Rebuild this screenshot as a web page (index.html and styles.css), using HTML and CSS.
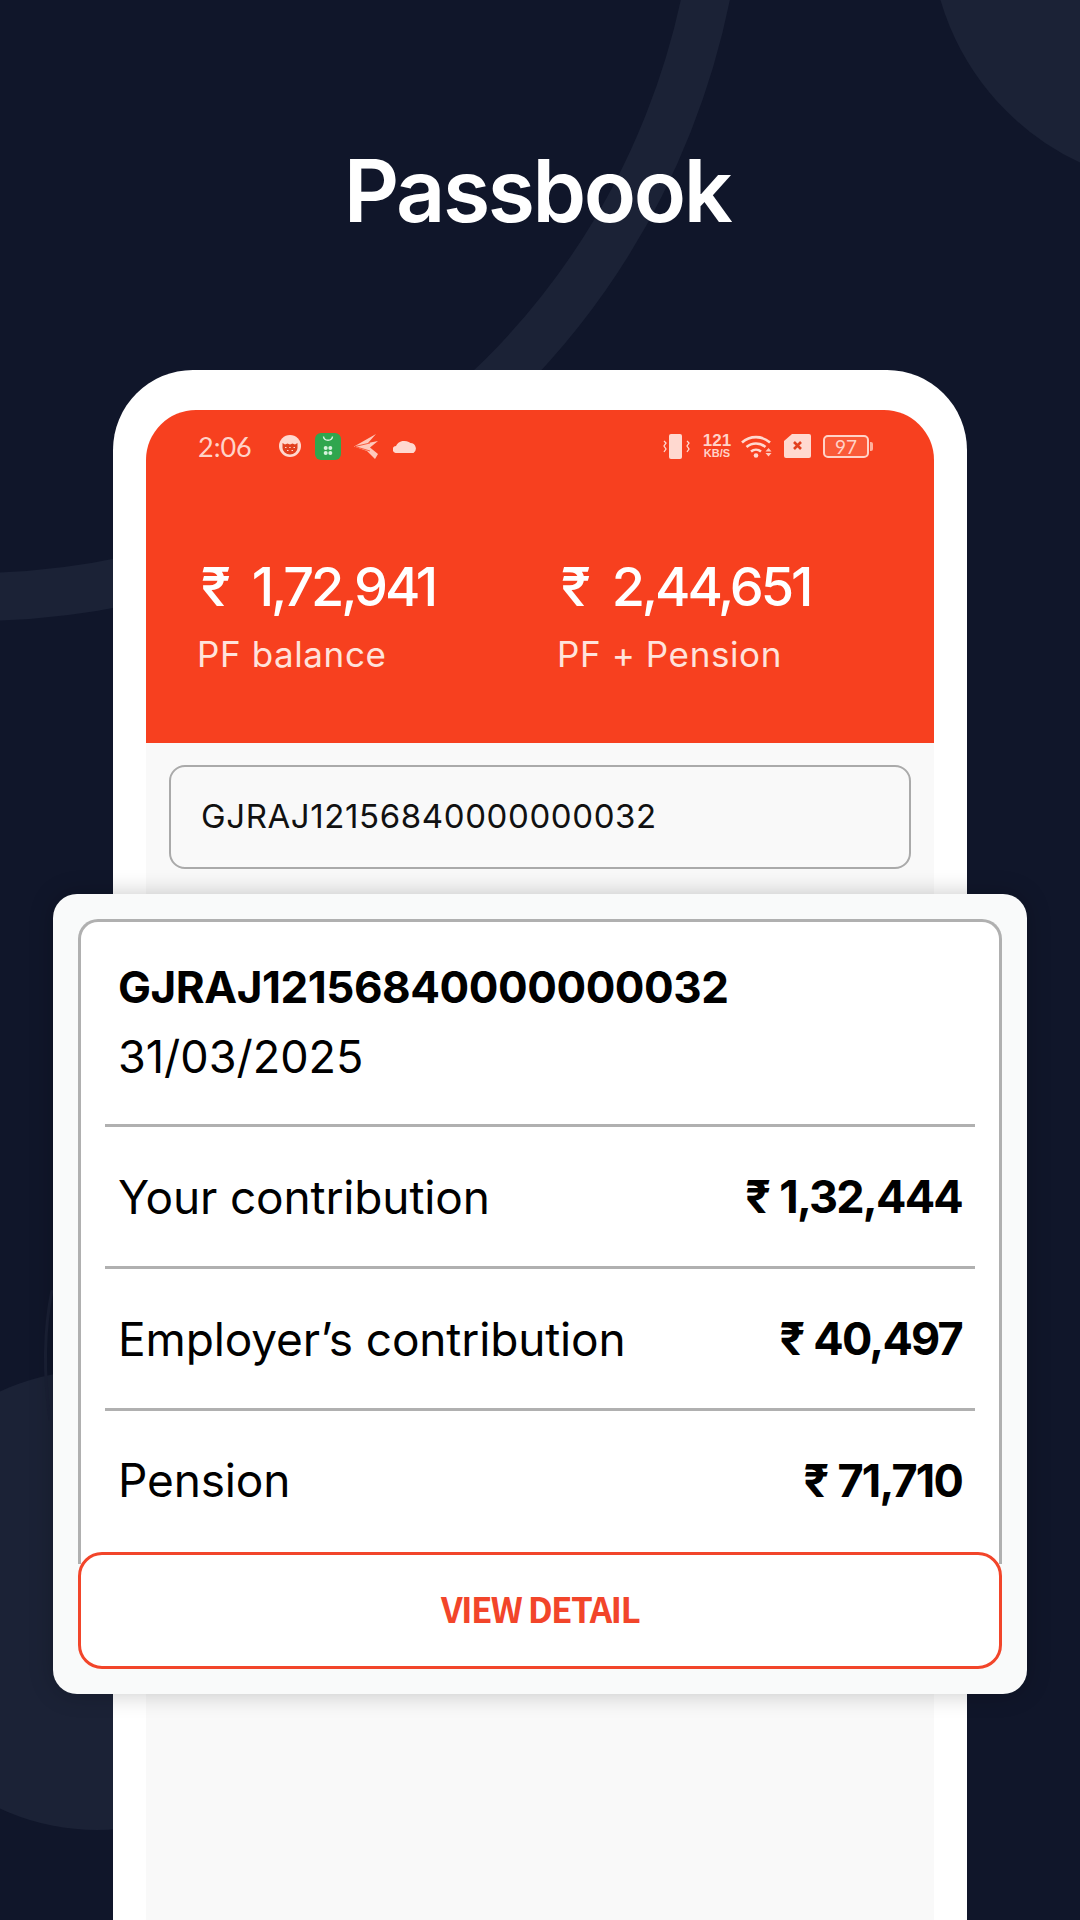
FILE: index.html
```html
<!DOCTYPE html>
<html lang="en">
<head>
    <meta charset="UTF-8">
    <meta name="viewport" content="width=device-width, initial-scale=1.0">
    <title>Passbook</title>
    <link rel="stylesheet" href="styles.css">
</head>
<body>
    <div class="page">
        <svg class="backdrop" width="1080" height="1920" viewBox="0 0 1080 1920">
            <circle cx="-29" cy="-153" r="750" fill="none" stroke="#1b2236" stroke-width="48"/>
            <circle cx="1190" cy="-73" r="260" fill="#1b2236"/>
            <circle cx="97" cy="1600" r="230" fill="#1b2236"/>
            <path d="M52 1290q-12 60-2 130" fill="none" stroke="#1a2035" stroke-width="3"/>
        </svg>

        <h1 class="title">Passbook</h1>

        <div class="phone">
            <div class="screen">
                <div class="header">
                    <div class="status">
                        <div class="status-left">
                            <span class="time">2:06</span>
                            <svg class="ic-cat" width="22" height="22" viewBox="0 0 22 22">
                                <circle cx="11" cy="11" r="11" fill="#ffd9d0"/>
                                <path d="M3.500 8l2.500 1.500 2.500-1 2.500 1 2.500-1 2.500 1L18.500 8v5a7.500 6.500 0 0 1-15 0z" fill="#e2401f"/>
                                <path d="M6 12.500h1.500M10.200 12.500h1.500M14.500 12.500h1.500M8 15.500h1.500M12.500 15.500h1.500" stroke="#ffd9d0" stroke-width="1.200"/>
                            </svg>
                            <svg class="ic-store" width="26" height="27" viewBox="0 0 26 27">
                                <rect width="26" height="27" rx="6" fill="#30a64e"/>
                                <path d="M8.500 3.500c.5 5 8.500 5 9 0" fill="none" stroke="#d8f2de" stroke-width="1.400"/>
                                <circle cx="10.700" cy="15" r="2" fill="#d8f2de"/>
                                <circle cx="15.300" cy="15" r="2" fill="#d8f2de"/>
                                <circle cx="10.700" cy="20" r="2" fill="#d8f2de"/>
                                <circle cx="15.300" cy="20" r="2" fill="#d8f2de"/>
                            </svg>
                            <svg class="ic-plane" width="25" height="25" viewBox="0 0 25 25">
                                <path d="M0 12.500L22 0 14 9 24 7 16 13.500 24 20 21 25 13 17z" fill="#ffc9bc"/>
                                <path d="M1 12.500L16 9M1 12.500L16 17" stroke="#f7401f" stroke-width=".8"/>
                            </svg>
                            <svg class="ic-cloud" width="24" height="14" viewBox="0 0 24 14">
                                <path d="M3.500 14a3.500 3.500 0 0 1-.500-7A9 8 0 0 1 17.500 4 5.500 5.500 0 0 1 20.500 14z" fill="#ffd9d0"/>
                            </svg>
                        </div>
                        <div class="status-right">
                            <svg class="ic-vibrate" width="28" height="25" viewBox="0 0 28 25">
                                <rect x="7" width="13" height="25" rx="2" fill="#ffd9d0"/>
                                <path d="M2 7l2 2-2 3 2 3-2 3M25 7l2 2-2 3 2 3-2 3" fill="none" stroke="#ffd9d0" stroke-width="1.300"/>
                            </svg>
                            <div class="speed"><span class="speed-num">121</span><span class="speed-unit">KB/S</span></div>
                            <svg class="ic-wifi" width="34" height="23" viewBox="0 0 34 23">
                                <path d="M1 7.500a21 21 0 0 1 28 0M5.500 12a14.500 14.500 0 0 1 19 0M10 16.500a8 8 0 0 1 10 0" fill="none" stroke="#ffd9d0" stroke-width="2.600"/>
                                <circle cx="15" cy="20.500" r="2.300" fill="#ffd9d0"/>
                                <path d="M27.500 13l3 3.500h-6zM24.500 18h6l-3 3.500z" fill="#ffc9bc"/>
                            </svg>
                            <svg class="ic-sim" width="27" height="24" viewBox="0 0 27 24">
                                <path d="M8 0h17a2 2 0 0 1 2 2v20a2 2 0 0 1-2 2H2a2 2 0 0 1-2-2V7z" fill="#ffd9d0"/>
                                <path d="M10 8l7 7M17 8l-7 7" stroke="#e2401f" stroke-width="2.600"/>
                            </svg>
                            <div class="battery"><span class="battery-num">97</span></div>
                        </div>
                    </div>
                    <div class="balances">
                        <div class="balance">
                            <div class="amount"><span class="rupee">₹</span>1,72,941</div>
                            <div class="amount-label">PF balance</div>
                        </div>
                        <div class="balance">
                            <div class="amount"><span class="rupee">₹</span>2,44,651</div>
                            <div class="amount-label">PF + Pension</div>
                        </div>
                    </div>
                </div>
                <div class="account-select">GJRAJ12156840000000032</div>
            </div>
        </div>

        <div class="float-card">
            <div class="detail">
                <div class="detail-head">
                    <div class="account-id">GJRAJ12156840000000032</div>
                    <div class="account-date">31/03/2025</div>
                </div>
                <div class="row">
                    <span class="row-name">Your contribution</span>
                    <span class="row-value"><span class="row-rupee">₹</span>1,32,444</span>
                </div>
                <div class="row">
                    <span class="row-name">Employer’s contribution</span>
                    <span class="row-value"><span class="row-rupee">₹</span>40,497</span>
                </div>
                <div class="row">
                    <span class="row-name">Pension</span>
                    <span class="row-value"><span class="row-rupee">₹</span>71,710</span>
                </div>
            </div>
            <div class="view-btn">VIEW DETAIL</div>
        </div>
    </div>
</body>
</html>
```

FILE: styles.css
```css
* {
    box-sizing: border-box;
}
body {
    margin: 0;
    font-family: Inter, "Noto Sans", sans-serif;
}
.page {
    position: relative;
    width: 1080px;
    height: 1920px;
    overflow: hidden;
    background: #10162a;
}
.backdrop {
    position: absolute;
    top: 0;
    left: 0;
}
.title {
    position: relative;
    height: 370px;
    margin: 0;
    padding: 138px 6px 0 0;
    font-size: 86px;
    line-height: 106px;
    font-weight: 600;
    letter-spacing: -2.4px;
    text-align: center;
    color: #fff;
}

/* phone */
.phone {
    position: relative;
    width: 854px;
    height: 1550px;
    margin-left: 113px;
    padding: 40px 33px 0;
    background: #fff;
    border-radius: 80px 80px 0 0;
}
.screen {
    height: 100%;
    background: #f9f9f9;
    border-radius: 50px 50px 0 0;
}
.header {
    height: 333px;
    padding: 22px 62px 0 52px;
    background: #f7401f;
    border-radius: 50px 50px 0 0;
}
.status {
    display: flex;
    justify-content: space-between;
    align-items: center;
    height: 28px;
}
.status-left, .status-right {
    display: flex;
    align-items: center;
}
.time {
    margin: 0 27px 0 0;
    font-family: Lato, sans-serif;
    font-size: 27px;
    color: #ffd3c8;
}
.ic-store {
    margin-left: 14px;
}
.ic-plane {
    margin-left: 13px;
}
.ic-cloud {
    margin-left: 14px;
}
.speed {
    display: flex;
    flex-direction: column;
    align-items: center;
    width: 30px;
    margin: 0 9px 0 12px;
    font-family: "Liberation Sans", sans-serif;
    font-weight: 700;
    color: #ffd3c8;
}
.speed-num {
    font-size: 17px;
    line-height: 15px;
}
.speed-unit {
    font-size: 11px;
    line-height: 11px;
}
.ic-sim {
    margin-left: 9px;
}
.battery {
    position: relative;
    width: 46px;
    height: 23px;
    margin: 0 3px 0 12px;
    border: 2px solid #ffd3c8;
    border-radius: 5px;
    background: #fa5a38;
    text-align: center;
}
.battery:after {
    content: "";
    position: absolute;
    top: 5px;
    right: -6px;
    width: 3px;
    height: 9px;
    border-radius: 0 2px 2px 0;
    background: #ffb09c;
}
.battery-num {
    display: block;
    font-family: Lato, sans-serif;
    font-size: 19px;
    line-height: 19px;
    color: #ffd3c8;
}
.balances {
    display: grid;
    grid-template-columns: 360px 1fr;
    margin-top: 94px;
}
.amount {
    padding-left: 3px;
    font-size: 54px;
    line-height: 66px;
    font-weight: 500;
    letter-spacing: -3.1px;
    color: #fff;
}
.rupee {
    margin-right: 24px;
}
.amount-label {
    margin: 12px 0 0 -1px;
    font-size: 35px;
    line-height: 44px;
    letter-spacing: 0.6px;
    color: #ffe3dc;
}
.account-select {
    height: 104px;
    margin: 22px 23px 0;
    padding-left: 30px;
    border: 2px solid #aaa;
    border-radius: 16px;
    font-size: 33px;
    line-height: 98px;
    letter-spacing: 0.6px;
    color: #111;
}

/* floating card */
.float-card {
    position: absolute;
    top: 894px;
    left: 53px;
    width: 974px;
    height: 800px;
    padding: 25px;
    background: #f9fafa;
    border-radius: 24px;
    box-shadow: 0 0 24px rgba(0, 0, 0, 0.22);
}
.detail {
    height: 645px;
    margin-bottom: -12px;
    padding: 0 24px;
    background: #fff;
    border: 3px solid #b0b0b0;
    border-bottom: none;
    border-radius: 20px 20px 0 0;
}
.detail-head {
    height: 205px;
    padding: 36px 13px 0 13px;
    border-bottom: 3px solid #b0b0b0;
}
.account-id {
    font-size: 44px;
    line-height: 58px;
    font-weight: 700;
    letter-spacing: -0.45px;
    color: #000;
}
.account-date {
    margin-top: 13px;
    font-size: 45px;
    line-height: 56px;
    color: #000;
}
.row {
    display: flex;
    justify-content: space-between;
    align-items: center;
    height: 142px;
    padding: 0 13px;
    border-bottom: 3px solid #b0b0b0;
}
.row:last-child {
    height: 138px;
    border-bottom: none;
}
.row-name {
    font-size: 46px;
    letter-spacing: -0.15px;
    color: #000;
}
.row-value {
    font-size: 45px;
    font-weight: 700;
    letter-spacing: -1.8px;
    color: #000;
}
.row-rupee {
    margin-right: 10px;
}
.view-btn {
    position: relative;
    height: 117px;
    background: #fff;
    border: 3px solid #f2452a;
    border-radius: 24px;
    font-family: "Noto Sans CJK SC", "Noto Sans", sans-serif;
    font-size: 35px;
    line-height: 105px;
    font-weight: 700;
    letter-spacing: -1.6px;
    text-align: center;
    color: #f2452a;
}
```
